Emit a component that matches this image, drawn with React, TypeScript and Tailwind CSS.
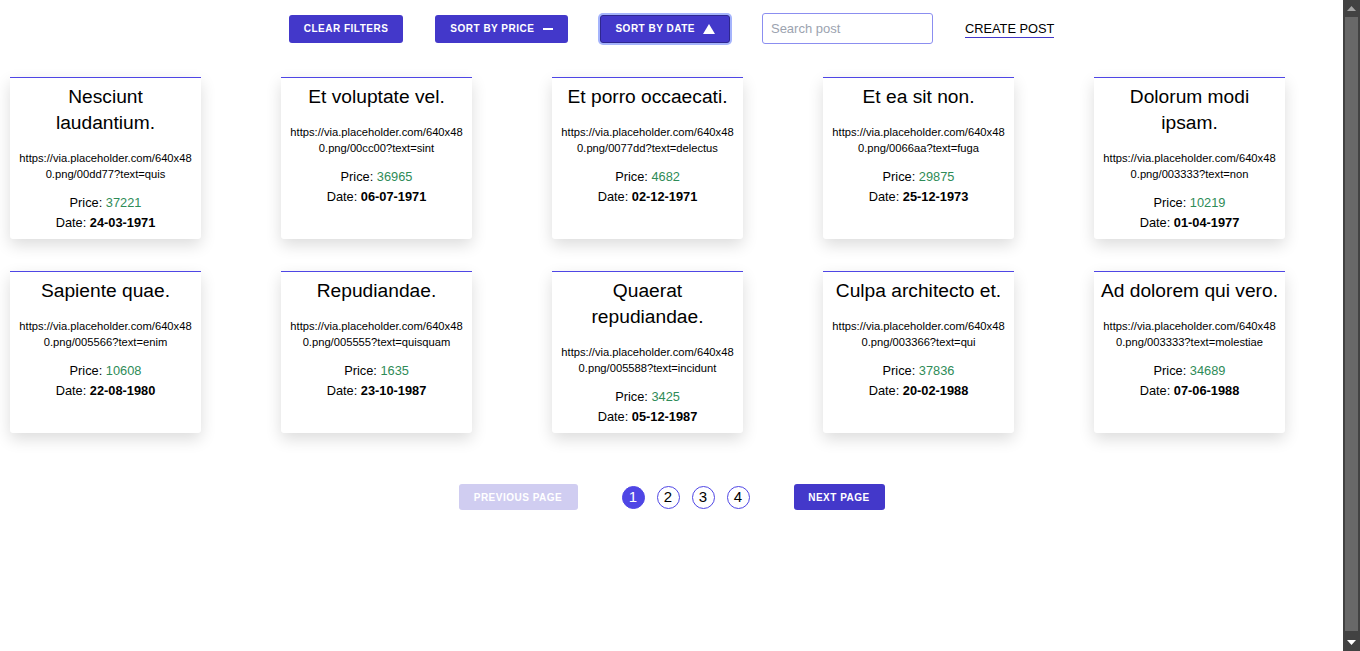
import { useState } from "react";

interface Post {
  title: string;
  url: string;
  price: number;
  date: string;
}

const posts: Post[] = [
  { title: "Nesciunt laudantium.", url: "https://via.placeholder.com/640x480.png/00dd77?text=quis", price: 37221, date: "24-03-1971" },
  { title: "Et voluptate vel.", url: "https://via.placeholder.com/640x480.png/00cc00?text=sint", price: 36965, date: "06-07-1971" },
  { title: "Et porro occaecati.", url: "https://via.placeholder.com/640x480.png/0077dd?text=delectus", price: 4682, date: "02-12-1971" },
  { title: "Et ea sit non.", url: "https://via.placeholder.com/640x480.png/0066aa?text=fuga", price: 29875, date: "25-12-1973" },
  { title: "Dolorum modi ipsam.", url: "https://via.placeholder.com/640x480.png/003333?text=non", price: 10219, date: "01-04-1977" },
  { title: "Sapiente quae.", url: "https://via.placeholder.com/640x480.png/005566?text=enim", price: 10608, date: "22-08-1980" },
  { title: "Repudiandae.", url: "https://via.placeholder.com/640x480.png/005555?text=quisquam", price: 1635, date: "23-10-1987" },
  { title: "Quaerat repudiandae.", url: "https://via.placeholder.com/640x480.png/005588?text=incidunt", price: 3425, date: "05-12-1987" },
  { title: "Culpa architecto et.", url: "https://via.placeholder.com/640x480.png/003366?text=qui", price: 37836, date: "20-02-1988" },
  { title: "Ad dolorem qui vero.", url: "https://via.placeholder.com/640x480.png/003333?text=molestiae", price: 34689, date: "07-06-1988" },
];

const PostCard = ({ post }: { post: Post }) => {
  return (
    <div className="w-[191px] h-[162px] bg-white border-t border-t-[#4f46e5] rounded-b-[3px] shadow-[0_6px_16px_rgba(0,0,0,0.14)] pt-[6px] text-center text-black">
      <h2 className="px-[6px] text-[19.2px] leading-[26px]">{post.title}</h2>
      <p className="mt-[14px] px-2 text-[11.2px] leading-[16px] break-all">{post.url}</p>
      <div className="mt-[11px] text-[12.8px] leading-[20px]">
        <p>
          Price: <span className="text-[#2e8b57]">{post.price}</span>
        </p>
        <p>
          Date: <span className="font-bold">{post.date}</span>
        </p>
      </div>
    </div>
  );
};

// static look-alike of the browser's dark scrollbar seen in the screenshot
const ScrollRail = () => (
  <div className="w-[17px] h-full bg-[#424242] flex flex-col items-center shrink-0">
    <div className="h-[17px] w-full flex items-center justify-center">
      <svg width="9" height="5" viewBox="0 0 9 5">
        <path d="M4.5 0 L9 5 L0 5 Z" fill="#a3a3a3" />
      </svg>
    </div>
    <div className="flex-1 w-[13px] bg-[#686868]"></div>
    <div className="h-[3px]"></div>
    <div className="h-[17px] w-full flex items-center justify-center">
      <svg width="9" height="5" viewBox="0 0 9 5">
        <path d="M0 0 L9 0 L4.5 5 Z" fill="#ffffff" />
      </svg>
    </div>
  </div>
);

export default function App() {
  const [page, setPage] = useState(1);
  const [search, setSearch] = useState("");

  return (
    <div className="h-screen flex bg-white overflow-hidden font-['Liberation_Sans',Arial,sans-serif] text-black">
      <div className="flex-1 min-w-0">
        <div className="flex items-center justify-center gap-8 pt-[13px]">
          <button className="h-[28px] px-[15px] rounded-[3px] bg-[#4338ca] text-white text-[10px] font-bold tracking-wider">
            CLEAR FILTERS
          </button>
          <button className="h-[28px] px-[15px] rounded-[3px] bg-[#4338ca] text-white text-[10px] font-bold tracking-wider flex items-center gap-[9px]">
            SORT BY PRICE
            <span className="block w-[10px] h-[2px] bg-white"></span>
          </button>
          <button className="h-[28px] px-[14px] rounded-[3px] bg-[#4338ca] text-white text-[10px] font-bold tracking-wider flex items-center gap-[8px] border border-[#2e278f] ring-2 ring-[#a5b4fc]">
            SORT BY DATE
            <svg width="12" height="10" viewBox="0 0 12 10">
              <path d="M6 0 L12 10 L0 10 Z" fill="white" />
            </svg>
          </button>
          <input
            value={search}
            onChange={(e) => setSearch(e.target.value)}
            placeholder="Search post"
            className="w-[171px] h-[31px] px-[8px] rounded-[3px] border border-[#8b8ef0] bg-white text-[13px] text-black placeholder:text-[#9ca3af] outline-none"
          />
          <a className="text-[12.8px] leading-[17px] border-b border-[#4338ca] cursor-pointer">
            CREATE POST
          </a>
        </div>

        <div className="mt-[33px] pl-[10px] flex flex-wrap gap-x-[80px] gap-y-[32px] w-[1290px]">
          {posts.map((post) => (
            <PostCard key={post.title} post={post} />
          ))}
        </div>

        <div className="mt-[51px] flex items-center justify-center">
          <button
            disabled
            className="h-[26px] w-[119px] rounded-[3px] bg-[#d0cdf1] text-white text-[10px] font-bold tracking-wider"
          >
            PREVIOUS PAGE
          </button>
          <div className="flex items-center gap-[12px] mx-[44px]">
            {[1, 2, 3, 4].map((n) => (
              <button
                key={n}
                onClick={() => setPage(n)}
                className={
                  n === page
                    ? "w-[23px] h-[23px] rounded-full bg-[#4f46e5] border border-[#4f46e5] text-white text-[15px] flex items-center justify-center"
                    : "w-[23px] h-[23px] rounded-full bg-white border border-[#4f46e5] text-black text-[15px] flex items-center justify-center"
                }
              >
                {n}
              </button>
            ))}
          </div>
          <button className="h-[26px] w-[91px] rounded-[3px] bg-[#4338ca] text-white text-[10px] font-bold tracking-wider">
            NEXT PAGE
          </button>
        </div>
      </div>
      <ScrollRail />
    </div>
  );
}
